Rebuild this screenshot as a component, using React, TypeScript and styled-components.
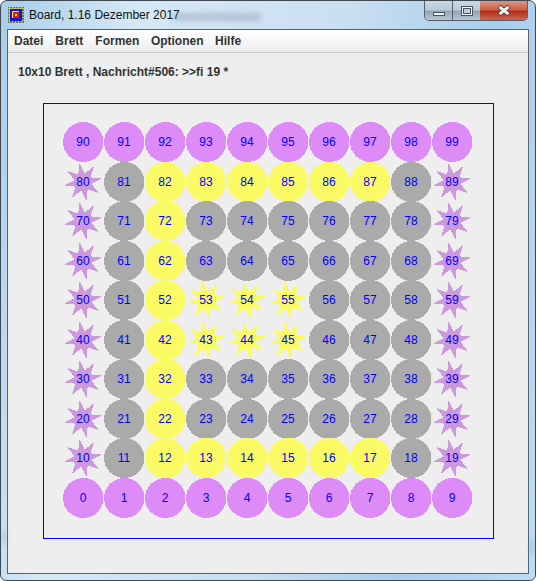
import React from 'react';
import styled, { createGlobalStyle } from 'styled-components';

type PieceKind = 'purpleDisc' | 'purpleStar' | 'grayDisc' | 'yellowDisc' | 'yellowStar';

const MENU_ITEMS = ['Datei', 'Brett', 'Formen', 'Optionen', 'Hilfe'];
const YELLOW_DISCS = [12, 13, 14, 15, 16, 17, 22, 32, 42, 52, 62, 72, 82, 83, 84, 85, 86, 87];
const YELLOW_STARS = [43, 44, 45, 53, 54, 55];

const PIECE_COLORS: Record<PieceKind, string> = {
  purpleDisc: '#dd8cf7',
  purpleStar: '#cc99dd',
  grayDisc: '#aaaaaa',
  yellowDisc: '#fafa64',
  yellowStar: '#fafa64',
};

const GlobalStyle = createGlobalStyle`
  html, body {
    margin: 0;
    padding: 0;
    background: #ffffff;
  }
`;

const Frame = styled.div`
  box-sizing: border-box;
  position: relative;
  overflow: hidden;
  width: 536px;
  height: 581px;
  display: flex;
  flex-direction: column;
  border: 1px solid #3f4750;
  border-radius: 7px 7px 6px 6px;
  background: linear-gradient(100deg, #a9cdea 0%, #d5e8f6 22%, #c9dff2 55%, #a8cdec 78%, #bcdcf6 100%);
  font-family: 'Liberation Sans', Arial, sans-serif;
`;

const TitleBar = styled.div`
  height: 28px;
  display: flex;
  align-items: flex-start;
  padding-left: 7px;
`;

const AppIcon = styled.svg`
  width: 16px;
  height: 16px;
  margin-top: 6px;
  flex: none;
`;

const TitleText = styled.div`
  margin: 7px 0 0 5px;
  font-size: 12px;
  line-height: 15px;
  color: #111111;
`;

const Smudge = styled.div<{ $left: number; $top: number; $width: number; $height: number }>`
  position: absolute;
  left: ${({ $left }) => $left}px;
  top: ${({ $top }) => $top}px;
  width: ${({ $width }) => $width}px;
  height: ${({ $height }) => $height}px;
  background: #7d8ea2;
  opacity: 0.5;
  filter: blur(3px);
`;

const WindowButtons = styled.div`
  margin-left: auto;
  margin-right: 7px;
  height: 19px;
  display: flex;
  border: 1px solid #55606c;
  border-top: none;
  border-radius: 0 0 5px 5px;
  overflow: hidden;
`;

const WindowButton = styled.div<{ $width: number; $close?: boolean }>`
  width: ${({ $width }) => $width}px;
  display: flex;
  align-items: center;
  justify-content: center;
  border-left: ${({ $close }) => ($close ? 'none' : '1px solid #55606c')};
  background: ${({ $close }) =>
    $close
      ? 'linear-gradient(180deg, #dc9585 0%, #cf6048 45%, #b42e18 55%, #cc6650 100%)'
      : 'linear-gradient(180deg, #c8d8e6 0%, #bccbd9 45%, #96a5b4 55%, #b6c6d5 100%)'};

  &:first-child {
    border-left: none;
  }
`;

const MinimizeGlyph = styled.div`
  width: 10px;
  height: 2px;
  margin-top: 7px;
  background: #f4f6f8;
  border: 1px solid #4a5561;
`;

const MaximizeGlyph = styled.div`
  box-sizing: border-box;
  width: 12px;
  height: 10px;
  border: 1px solid #4a5561;
  background: #c5d2de;
  box-shadow: inset 0 0 0 1px #f0f4f7, inset 0 0 0 2px #4a5561;
`;

const Client = styled.div`
  box-sizing: border-box;
  width: 522px;
  height: 545px;
  margin-left: 6px;
  display: flex;
  flex-direction: column;
  border: 1px solid #56636f;
  background: #eeeeee;
`;

const MenuBar = styled.div`
  height: 22px;
  display: flex;
  align-items: center;
  border-bottom: 1px solid #c9c9c9;
  background: linear-gradient(180deg, #ffffff 0%, #f6f6f6 55%, #ececec 100%);
`;

const MenuItem = styled.div`
  padding: 0 6px;
  font-size: 12px;
  font-weight: bold;
  color: #333333;

  &:nth-child(n + 3) {
    padding-right: 5.5px;
  }
`;

const Caption = styled.div`
  height: 50px;
  padding: 6px 0 0 10px;
  box-sizing: border-box;
  font-size: 12px;
  line-height: 26px;
  font-weight: bold;
  color: #333333;
`;

const Board = styled.div`
  box-sizing: border-box;
  width: 451px;
  height: 436px;
  margin-left: 35px;
  padding: 18px 0 0 19px;
  display: grid;
  grid-template-columns: repeat(10, 41px);
  grid-template-rows: repeat(10, 39.56px);
  border: 1px solid #0000ff;
`;

const Cell = styled.div`
  display: grid;
  place-items: center;
  width: 41px;
  height: 40px;
`;

const PieceSvg = styled.svg`
  grid-area: 1 / 1;
  width: 41px;
  height: 40px;
  overflow: visible;
  shape-rendering: crispEdges;
`;

const CellNumber = styled.span`
  grid-area: 1 / 1;
  margin-right: 1px;
  font-size: 12px;
  line-height: 14px;
  color: #0000ff;
`;

const starPoints = () => {
  const points: string[] = [];
  for (let i = 0; i < 16; i++) {
    const radius = i % 2 === 0 ? 19.5 : 8.8;
    const angle = ((-10 + i * 22.5) * Math.PI) / 180;
    points.push(`${(20 + radius * Math.cos(angle)).toFixed(2)},${(20 + radius * Math.sin(angle)).toFixed(2)}`);
  }
  return points.join(' ');
};

const STAR = starPoints();

const kindOf = (n: number): PieceKind => {
  const row = Math.floor(n / 10);
  const col = n % 10;
  if (row === 0 || row === 9) return 'purpleDisc';
  if (col === 0 || col === 9) return 'purpleStar';
  if (YELLOW_DISCS.includes(n)) return 'yellowDisc';
  if (YELLOW_STARS.includes(n)) return 'yellowStar';
  return 'grayDisc';
};

const Piece: React.FC<{ n: number }> = ({ n }) => {
  const kind = kindOf(n);
  const isStar = kind === 'purpleStar' || kind === 'yellowStar';
  return (
    <Cell>
      <PieceSvg viewBox="0 0 41 40">
        {isStar ? (
          <polygon points={STAR} fill={PIECE_COLORS[kind]} />
        ) : (
          <ellipse cx="20.2" cy="20" rx="20.2" ry="20" fill={PIECE_COLORS[kind]} />
        )}
      </PieceSvg>
      <CellNumber>{n}</CellNumber>
    </Cell>
  );
};

const BoardIcon = () => (
  <AppIcon viewBox="0 0 16 16" shapeRendering="crispEdges">
    <rect width="16" height="16" fill="#6d7a3c" />
    <path d="M1 0v16M4 0v16M7 0v16M10 0v16M13 0v16M0 1h16M0 4h16M0 7h16M0 10h16M0 13h16" stroke="#b9c28a" strokeWidth="1" />
    <rect x="2" y="2" width="12" height="12" fill="#1414d8" />
    <rect x="4" y="4" width="7" height="7" fill="#f5e81e" />
    <rect x="5" y="5" width="6" height="6" fill="#e01818" />
    <rect x="7" y="7" width="2" height="2" fill="#f5e81e" />
  </AppIcon>
);

const CloseGlyph = () => (
  <svg width="14" height="11" viewBox="0 0 14 11">
    <path d="M2 1.5 L12 9.5 M12 1.5 L2 9.5" stroke="#4f3a38" strokeWidth="4.6" />
    <path d="M2.5 1.8 L11.5 9.2 M11.5 1.8 L2.5 9.2" stroke="#f6f3f2" strokeWidth="3" />
  </svg>
);

const App: React.FC = () => {
  const numbers: number[] = [];
  for (let row = 9; row >= 0; row--) {
    for (let col = 0; col < 10; col++) {
      numbers.push(row * 10 + col);
    }
  }

  return (
    <>
      <GlobalStyle />
      <Frame>
        <Smudge $left={172} $top={13} $width={88} $height={6} />
        <Smudge $left={1} $top={530} $width={3} $height={12} />
        <Smudge $left={530} $top={540} $width={3} $height={12} />
        <TitleBar>
          <BoardIcon />
          <TitleText>Board, 1.16 Dezember 2017</TitleText>
          <WindowButtons>
            <WindowButton $width={27}>
              <MinimizeGlyph />
            </WindowButton>
            <WindowButton $width={27}>
              <MaximizeGlyph />
            </WindowButton>
            <WindowButton $width={47} $close>
              <CloseGlyph />
            </WindowButton>
          </WindowButtons>
        </TitleBar>
        <Client>
          <MenuBar>
            {MENU_ITEMS.map((item) => (
              <MenuItem key={item}>{item}</MenuItem>
            ))}
          </MenuBar>
          <Caption>10x10 Brett , Nachricht#506: &gt;&gt;fi 19 *</Caption>
          <Board>
            {numbers.map((n) => (
              <Piece key={n} n={n} />
            ))}
          </Board>
        </Client>
      </Frame>
    </>
  );
};

export default App;
